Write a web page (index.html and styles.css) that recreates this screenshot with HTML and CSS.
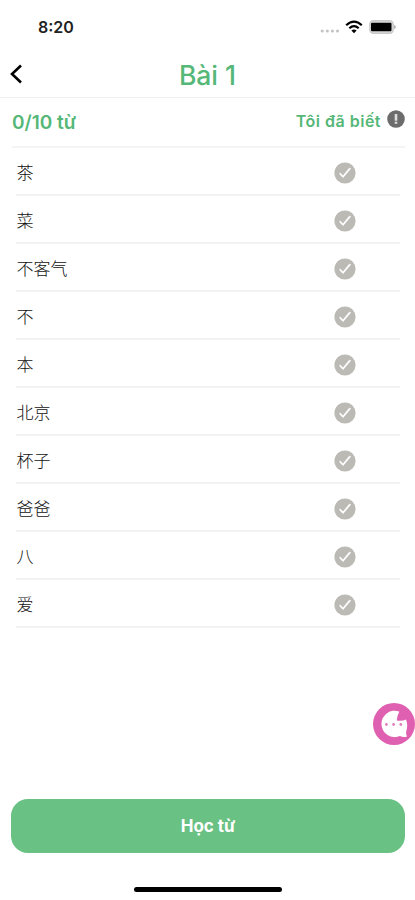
FILE: index.html
```html
<!DOCTYPE html>
<html lang="vi">
<head>
<meta charset="utf-8">
<meta name="viewport" content="width=device-width, initial-scale=1">
<title>Bài 1</title>
<link rel="stylesheet" href="styles.css">
</head>
<body>
<svg class="defs" aria-hidden="true">
  <symbol id="check" viewBox="0 0 22 22">
    <circle cx="11" cy="11" r="10.6" fill="#bbbab5"/>
    <path d="M6.2 11.7l2.8 3.1 6.8-8.2" fill="none" stroke="#fff" stroke-width="1.7" stroke-linecap="round" stroke-linejoin="round"/>
  </symbol>
</svg>
<div class="screen">
  <div class="status">
    <span class="time">8:20</span>
    <div class="indicators">
      <svg class="signal" viewBox="0 0 20 4"><g fill="#c4c4c4"><circle cx="2.2" cy="2" r="1.6"/><circle cx="7.3" cy="2" r="1.6"/><circle cx="12.4" cy="2" r="1.6"/><circle cx="17.5" cy="2" r="1.6"/></g></svg>
      <svg class="wifi" viewBox="0 0 18 14"><g fill="none" stroke="#000" stroke-width="2.2"><path d="M1.2 5.2Q9-2 16.8 5.2"/><path d="M4.3 8.2Q9 4 13.7 8.2"/></g><path d="M6.4 10.5Q9 8.4 11.6 10.5L9 13.2z"/></svg>
      <svg class="battery" viewBox="0 0 27 14"><rect x=".8" y=".8" width="23.4" height="12.4" rx="3.6" fill="#ddd" stroke="#c9c9c9" stroke-width="1.4"/><rect x="2" y="2.8" width="20.5" height="8.4" rx="1"/><path d="M25.2 4.7q1.6.8 1.6 2.3t-1.6 2.3z" fill="#aaa"/></svg>
    </div>
  </div>
  <header class="header">
    <svg class="back" viewBox="0 0 13 20"><path d="M11 1.5L2 10l9 8.5" fill="none" stroke="#000" stroke-width="2.6"/></svg>
    <h1>Bài 1</h1>
  </header>
  <div class="summary">
    <span class="count">0/10 từ</span>
    <span class="known">Tôi đã biết</span>
    <svg class="info" viewBox="0 0 18 18"><circle cx="9" cy="9" r="8.8" fill="#6c6c6c"/><path d="M9 4v6.8M9 11.8v2" stroke="#dedede" stroke-width="2.6"/></svg>
  </div>
  <ul class="words">
    <li><span lang="zh">茶</span><svg><use href="#check"/></svg></li>
    <li><span lang="zh">菜</span><svg><use href="#check"/></svg></li>
    <li><span lang="zh">不客气</span><svg><use href="#check"/></svg></li>
    <li><span lang="zh">不</span><svg><use href="#check"/></svg></li>
    <li><span lang="zh">本</span><svg><use href="#check"/></svg></li>
    <li><span lang="zh">北京</span><svg><use href="#check"/></svg></li>
    <li><span lang="zh">杯子</span><svg><use href="#check"/></svg></li>
    <li><span lang="zh">爸爸</span><svg><use href="#check"/></svg></li>
    <li><span lang="zh">八</span><svg><use href="#check"/></svg></li>
    <li><span lang="zh">爱</span><svg><use href="#check"/></svg></li>
  </ul>
  <button class="learn">Học từ</button>
  <div class="home"></div>
  <svg class="chat" viewBox="0 0 42 42"><circle cx="21" cy="21" r="21" fill="#df60b0"/><path d="M26.3 8.6A13.2 13.2 0 1 0 27 33q3.6 1.9 7 .4-1.4-2.3-.8-4.9Q35.4 22 33 16.4q-3 1.9-9.2 1.2.3-4.8 2.5-9Z" fill="#fff"/><g fill="#df7fbd"><circle cx="13.4" cy="21.5" r="1.4"/><circle cx="20.6" cy="21.5" r="1.4"/><circle cx="27.8" cy="21.5" r="1.4"/></g></svg>
</div>
</body>
</html>
```

FILE: styles.css
```css
* { box-sizing: border-box; }
body { margin: 0; background: #fff; font-family: Inter, "Noto Sans CJK SC", sans-serif; }
svg { display: block; flex: none; }
.defs { position: absolute; width: 0; height: 0; }
.screen { position: relative; display: flex; flex-direction: column; width: 415px; height: 900px; overflow: hidden; }

.status { display: flex; justify-content: space-between; align-items: center; height: 51px; padding: 3px 19px 0 38px; }
.time { font-size: 16px; font-weight: 600; line-height: 20px; color: #222; }
.indicators { display: flex; align-items: center; }
.signal { width: 20px; height: 4px; margin: 8px 5px 0 0; }
.wifi { width: 18px; height: 14px; margin-right: 6px; }
.battery { width: 27px; height: 14px; }

.header { display: flex; align-items: center; height: 47px; padding: 0 10px; border-bottom: 1px solid #eee; }
.back { width: 13px; height: 20px; }
.header h1 { flex: 1; margin: 1px 13px 0 0; text-align: center; font-size: 26.5px; font-weight: 500; line-height: 32px; color: #55b778; }

.summary { display: flex; align-items: center; height: 50px; margin: 0 10px 0 12px; padding-bottom: 2px; border-bottom: 2px solid #f4f4f4; color: #55b778; }
.count { margin-top: 2px; font-size: 19px; font-weight: 600; }
.known { margin: 0 0 0 auto; font-size: 16px; font-weight: 600; letter-spacing: .5px; }
.info { width: 18px; height: 18px; margin: 0 0 4px 6px; }

.words { margin: 0 15px 0 16px; padding: 0; list-style: none; }
.words li { display: flex; align-items: center; justify-content: space-between; height: 48px; padding: 3px 44px 0 0; border-bottom: 2px solid #f2f2f2; }
.words span { margin: 0 0 1px .5px; font-family: "Noto Sans CJK SC", sans-serif; font-size: 17px; font-weight: 300; line-height: 24px; color: #111; }
.words svg { width: 22px; height: 22px; }

.learn { height: 54px; margin: auto 10px 0 11px; padding: 0; border: 0; border-radius: 17px; background: #69c184; color: #fff; font: 700 17px/24px Inter, sans-serif; }
.home { width: 148px; height: 5px; margin: 34px auto 8px 134px; border-radius: 3px; background: #000; }
.chat { position: absolute; left: 373px; top: 703px; width: 42px; height: 42px; }
```
